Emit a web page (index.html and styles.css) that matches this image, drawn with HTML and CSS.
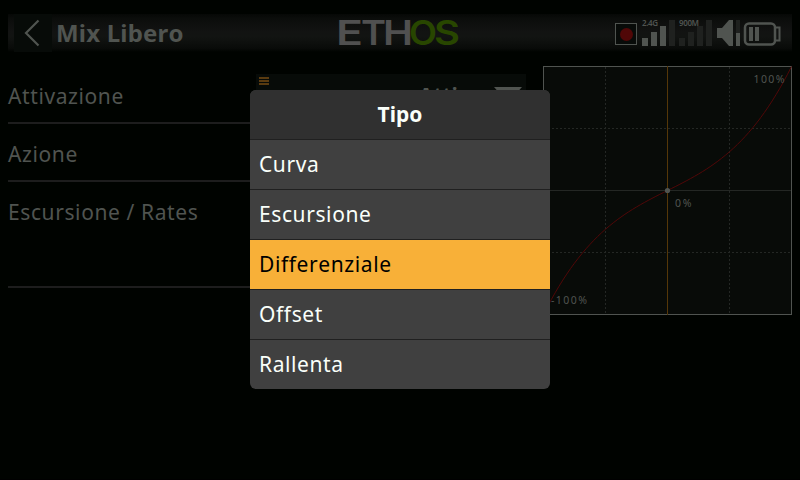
FILE: index.html
```html
<!DOCTYPE html>
<html lang="it">
<head>
<meta charset="utf-8">
<title>Mix Libero</title>
<link rel="stylesheet" href="styles.css">
</head>
<body>
<div class="screen">
  <header class="topbar">
    <div class="back"><svg width="38" height="38" viewBox="0 0 38 38"><path d="M24.500 6.500 12 19 24.500 31.500" fill="none" stroke="#505450" stroke-width="2.200"/></svg></div>
    <h1 class="title">Mix Libero</h1>
    <svg class="logo" width="130" height="36" viewBox="0 0 130 36">
      <g font-family="Inter, sans-serif" font-weight="600" font-size="34.500" fill="#505050">
        <text x="6" y="30.500" textLength="27" lengthAdjust="spacingAndGlyphs">E</text>
        <text x="31" y="30.500" textLength="25" lengthAdjust="spacingAndGlyphs">T</text>
        <text x="53" y="30.500" textLength="30" lengthAdjust="spacingAndGlyphs">H</text>
        <text x="79" y="30.500" textLength="28" lengthAdjust="spacingAndGlyphs" fill="#284600">O</text>
        <text x="104" y="30.500" textLength="26" lengthAdjust="spacingAndGlyphs" fill="#284600">S</text>
      </g>
    </svg>
    <svg class="status" width="172" height="40" viewBox="0 0 172 40">
      <rect x="1.500" y="9.500" width="21" height="21" fill="#080b09" stroke="#505450"/>
      <circle cx="12.500" cy="20.500" r="6.500" fill="#500707"/>
      <g fill="#505450">
        <rect x="28" y="24" width="6" height="8"/><rect x="37" y="18" width="6" height="14"/><rect x="46" y="12" width="6" height="20"/>
        <path d="M103 14h5l7-8h4v26h-4l-7-8h-5z"/><rect x="122" y="19" width="4" height="13"/>
        <rect x="135" y="13" width="4" height="14"/><rect x="141" y="13" width="4" height="14"/>
      </g>
      <g fill="#1f211f">
        <rect x="55" y="6" width="6" height="26"/><rect x="65" y="24" width="6" height="8"/><rect x="74" y="18" width="6" height="14"/><rect x="83" y="12" width="6" height="20"/><rect x="92" y="6" width="6" height="26"/><rect x="122" y="6" width="4" height="13"/>
      </g>
      <rect x="131" y="9.500" width="30" height="21" rx="4" fill="none" stroke="#505450" stroke-width="2.500"/>
      <path d="M162 13.500h3.500v13H162" fill="none" stroke="#505450" stroke-width="2"/>
      <g class="band"><text x="28" y="11.800" textLength="16">2.4G</text><text x="65" y="11.800" textLength="20">900M</text></g>
    </svg>
  </header>
  <main class="content">
    <section class="form">
      <div class="row"><span class="label">Attivazione</span>
        <div class="select">
          <svg class="menu" width="10" height="8"><path d="M0 1h10M0 4h10M0 7h10" stroke="#5a3b10" stroke-width="2"/></svg>
          <span class="value">Attivo</span>
          <svg class="arrow" width="28" height="16"><path d="M0 0h28L14 16z" fill="#505450"/></svg>
        </div>
      </div>
      <div class="row"><span class="label">Azione</span></div>
      <div class="row tall"><span class="label">Escursione / Rates</span></div>
    </section>
    <svg class="chart" width="249" height="249" viewBox="0 0 249 249">
      <rect x=".5" y=".5" width="248" height="248" fill="#080b08" stroke="#505450"/>
      <g stroke="#242724" stroke-dasharray="2 2"><path d="M62.500 1v247M186.500 1v247M1 62.500h247M1 186.500h247"/></g>
      <path d="M1 124.500h247" stroke="#242724"/>
      <path d="M124.500 0v249" stroke="#553708"/>
      <path d="M.5 248.500C41.800 165.800 83.200 145.200 124.500 124.500S207.200 83.200 248.500 .5" fill="none" stroke="#500707"/>
      <circle cx="124.500" cy="124.500" r="2.600" fill="#505450"/>
      <g class="axis"><text x="210.500" y="17" textLength="31">100%</text><text x="132" y="141" textLength="16.500">0%</text><text x="8" y="238" textLength="36">-100%</text></g>
    </svg>
  </main>
  <div class="dialog">
    <div class="head">Tipo</div>
    <div class="item">Curva</div>
    <div class="item">Escursione</div>
    <div class="item selected">Differenziale</div>
    <div class="item">Offset</div>
    <div class="item">Rallenta</div>
  </div>
</div>
</body>
</html>
```
FILE: styles.css
```css
* { box-sizing: border-box; }
body { margin: 0; background: #000300; font-family: "Noto Sans", sans-serif; font-kerning: none; font-variant-ligatures: none; }
.screen { position: relative; width: 800px; height: 480px; padding: 14px 8px 0; overflow: hidden; border-bottom: 1px solid #000; }
.topbar { display: flex; height: 38px; padding-left: 6px; background: linear-gradient(#060806 0, #0b0d0b 12%, #121312 45%, #121412 60%, #090b09 90%, #000300 100%); }
.back { width: 38px; height: 38px; background: #070b08; }
.back svg { display: block; }
.title { margin: 0 0 0 4px; width: 274px; color: #505450; font-size: 24px; line-height: 38px; font-weight: 700; letter-spacing: .2px; white-space: nowrap; }
.logo { flex: none; }
.status { margin-left: 154px; flex: none; }
.band { font: 600 8px "Noto Sans", sans-serif; fill: #505450; }
.content { display: flex; justify-content: space-between; padding-top: 14px; }
.form { width: 518px; }
.row { display: flex; justify-content: space-between; height: 58px; border-bottom: 2px solid #1d1d1d; }
.row.tall { height: 106px; }
.label { color: #505450; font-size: 21px; line-height: 60px; letter-spacing: .6px; white-space: nowrap; }
.select { display: flex; width: 270px; height: 44px; margin-top: 8px; padding: 3px 4px 0 3px; background: #070b08; }
.value { margin-left: auto; padding-top: 4px; color: #505450; font-size: 21px; line-height: 29px; font-weight: 700; }
.arrow { margin: 10px 0 0 11px; }
.chart { flex: none; }
.axis { font: 10.500px "Noto Sans", sans-serif; fill: #505450; }
.dialog { position: absolute; left: 250px; top: 90px; width: 300px; height: 299px; border-radius: 6px; overflow: hidden; background: #404040; color: #fafffa; font-size: 21px; }
.head { height: 49px; background: #303030; text-align: center; font-weight: 700; line-height: 48px; }
.item { height: 50px; padding-left: 9px; border-top: 1px solid #202020; line-height: 48px; letter-spacing: .6px; }
.selected { background: #f8b038; color: #000; }
```
